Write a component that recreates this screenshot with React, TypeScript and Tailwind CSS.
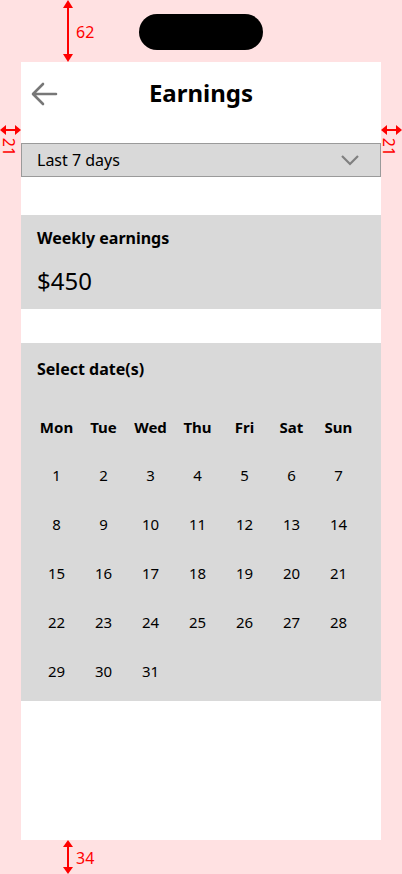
const days = ["Mon", "Tue", "Wed", "Thu", "Fri", "Sat", "Sun"];
const dates = Array.from({ length: 31 }, (_, i) => i + 1);

export default function App() {
  return (
    <div
      className="relative w-[402px] h-[874px] bg-[#ffe1e2] overflow-hidden"
      style={{ fontFamily: '"Noto Sans", "Open Sans", sans-serif' }}
    >
      {/* dynamic island */}
      <div className="absolute left-[139px] top-[14px] w-[124px] h-[36px] rounded-full bg-black" />

      {/* annotations */}
      <svg className="absolute left-[62px] top-0" width="12" height="62">
        <line x1="6" y1="3" x2="6" y2="59" stroke="#ff0000" strokeWidth="2" />
        <path d="M1 8 L6 0 L11 8 Z" fill="#ff0000" />
        <path d="M1 54 L6 62 L11 54 Z" fill="#ff0000" />
      </svg>
      <span className="absolute left-[76px] top-[21px] text-[16px] leading-[22px] text-[#ff0000]">62</span>

      <svg className="absolute left-[62px] top-[840px]" width="12" height="34">
        <line x1="6" y1="3" x2="6" y2="31" stroke="#ff0000" strokeWidth="2" />
        <path d="M1 7 L6 0 L11 7 Z" fill="#ff0000" />
        <path d="M1 27 L6 34 L11 27 Z" fill="#ff0000" />
      </svg>
      <span className="absolute left-[76px] top-[847px] text-[16px] leading-[22px] text-[#ff0000]">34</span>

      <svg className="absolute left-0 top-[124px]" width="21" height="12">
        <line x1="3" y1="6" x2="18" y2="6" stroke="#ff0000" strokeWidth="2" />
        <path d="M6 1 L0 6 L6 11 Z" fill="#ff0000" />
        <path d="M15 1 L21 6 L15 11 Z" fill="#ff0000" />
      </svg>
      <span className="absolute left-0 top-[141px] rotate-90 text-[16px] leading-[12px] text-[#ff0000]">21</span>

      <svg className="absolute left-[381px] top-[124px]" width="21" height="12">
        <line x1="3" y1="6" x2="18" y2="6" stroke="#ff0000" strokeWidth="2" />
        <path d="M6 1 L0 6 L6 11 Z" fill="#ff0000" />
        <path d="M15 1 L21 6 L15 11 Z" fill="#ff0000" />
      </svg>
      <span className="absolute left-[380px] top-[141px] rotate-90 text-[16px] leading-[12px] text-[#ff0000]">21</span>

      {/* screen */}
      <div className="absolute left-[21px] top-[62px] w-[360px] h-[778px] bg-white flex flex-col text-black">
        <div className="relative h-[66px] flex items-center justify-center">
          <svg className="absolute left-[9px] top-[19px]" width="28" height="26" viewBox="0 0 28 26">
            <path d="M26 13 H4 M13 3 L3 13 L13 23" fill="none" stroke="#777" strokeWidth="2.6" strokeLinecap="round" strokeLinejoin="round" />
          </svg>
          <h1 className="text-[24px] font-bold leading-none mt-[-4px]">Earnings</h1>
        </div>

        <div className="mt-[15px] h-[34px] bg-[#d9d9d9] border border-[#9a9a9a] flex items-center justify-between pl-[15px] pr-[20px]">
          <span className="text-[16px]">Last 7 days</span>
          <svg width="20" height="12" viewBox="0 0 20 12">
            <path d="M2 2 L10 10 L18 2" fill="none" stroke="#808080" strokeWidth="2.2" />
          </svg>
        </div>

        <div className="mt-[38px] h-[94px] bg-[#d9d9d9] px-4 pt-[12px]">
          <div className="text-[16px] font-bold leading-[22px]">Weekly earnings</div>
          <div className="text-[24px] leading-[30px] mt-[17px]">$450</div>
        </div>

        <div className="mt-[34px] h-[358px] bg-[#d9d9d9] px-4 pt-[15px]">
          <div className="text-[16px] font-bold leading-[22px]">Select date(s)</div>
          <div className="grid grid-cols-7 w-[329px] ml-[-4px] mt-[35px]">
            {days.map((d) => (
              <div key={d} className="h-[24px] flex items-center justify-center text-[15px] font-bold">
                {d}
              </div>
            ))}
            {dates.map((n) => (
              <div key={n} className="h-[49px] pt-[26px] flex items-start justify-center text-[15px] leading-[20px]">
                {n}
              </div>
            ))}
          </div>
        </div>
      </div>
    </div>
  );
}
